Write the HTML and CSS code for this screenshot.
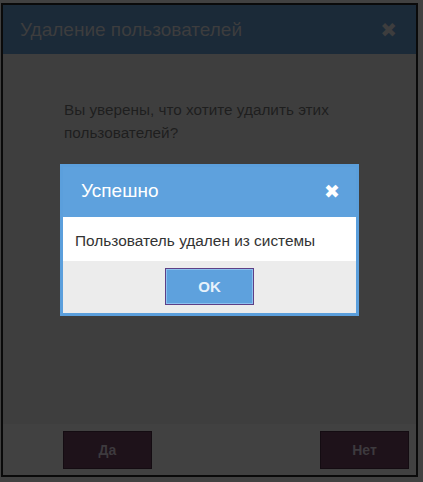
FILE: index.html
```html
<!DOCTYPE html>
<html>
<head>
<meta charset="utf-8">
<link rel="stylesheet" href="styles.css">
</head>
<body>
<div class="dialog">
  <div class="dlg-head">
    <span class="dlg-title">Удаление пользователей</span>
    <span class="dlg-close">&#x2716;</span>
  </div>
  <div class="dlg-body">
    <p class="dlg-text">Вы уверены, что хотите удалить этих пользователей?</p>
  </div>
  <div class="dlg-foot">
    <button class="dark-btn">Да</button>
    <button class="dark-btn">Нет</button>
  </div>
</div>
<div class="modal">
  <div class="modal-head">
    <span class="modal-title">Успешно</span>
    <span class="modal-close">&#x2716;</span>
  </div>
  <div class="modal-body">Пользователь удален из системы</div>
  <div class="modal-foot">
    <button class="ok-btn">OK</button>
  </div>
</div>
</body>
</html>
```
FILE: styles.css
```css
html, body {
  margin: 0;
  padding: 0;
}
body {
  background: #414141;
  font-family: "Liberation Sans", Arial, sans-serif;
  width: 423px;
  height: 482px;
  overflow: hidden;
  position: relative;
}
.dialog {
  margin: 3px 0 0 1px;
  width: 413px;
  height: 470px;
  border: 2px solid #0a0a0a;
  background: #3e3e3e;
  display: flex;
  flex-direction: column;
}
.dlg-head {
  height: 49px;
  background: #1b2a38;
  display: flex;
  align-items: center;
  justify-content: space-between;
  padding: 0 19px 0 17px;
  flex-shrink: 0;
}
.dlg-title {
  font-size: 19px;
  color: #3d3d3e;
}
.dlg-close {
  font-size: 20px;
  color: #3d3d3e;
  font-family: "DejaVu Sans", sans-serif;
  font-weight: bold;
}
.dlg-body {
  flex: 1;
  padding: 44px 70px 0 61px;
}
.dlg-text {
  margin: 0;
  font-size: 15.3px;
  line-height: 23px;
  color: #1e1e1e;
}
.dlg-foot {
  height: 51px;
  flex-shrink: 0;
  background: #414141;
  display: flex;
  justify-content: space-between;
  align-items: flex-start;
  padding: 7px 7px 0 60px;
  box-sizing: border-box;
}
.dark-btn {
  width: 89px;
  height: 38px;
  background: #1e121a;
  border: 1px solid #140c12;
  color: #3d3a3e;
  font-family: "Liberation Sans", Arial, sans-serif;
  font-size: 14px;
  font-weight: bold;
}
.modal {
  position: absolute;
  left: 60px;
  top: 164px;
  width: 293px;
  border: 3px solid #5b9fdc;
  box-shadow: inset 0 0 0 1px #6aaee8;
  background: #5ea1dd;
}
.modal-head {
  height: 50px;
  box-sizing: border-box;
  display: flex;
  align-items: center;
  justify-content: space-between;
  padding: 0 16px 2px 18px;
  background: #5ea1dd;
}
.modal-title {
  font-size: 19px;
  color: #ffffff;
}
.modal-close {
  font-family: "DejaVu Sans", sans-serif;
  font-weight: bold;
  font-size: 19px;
  color: #ffffff;
}
.modal-body {
  background: #ffffff;
  height: 44px;
  box-sizing: border-box;
  padding: 15px 0 0 12px;
  font-size: 15.4px;
  color: #333333;
}
.modal-foot {
  background: #ececec;
  height: 52px;
  display: flex;
  justify-content: center;
  padding-top: 7px;
  box-sizing: border-box;
}
.ok-btn {
  width: 89px;
  height: 37px;
  background: #5ea1dd;
  border: 1px solid #5e3f86;
  box-shadow: inset 0 0 0 1px #8cc0ee;
  color: #e8f1fb;
  font-family: "Liberation Sans", Arial, sans-serif;
  font-size: 15px;
  font-weight: bold;
}
```
